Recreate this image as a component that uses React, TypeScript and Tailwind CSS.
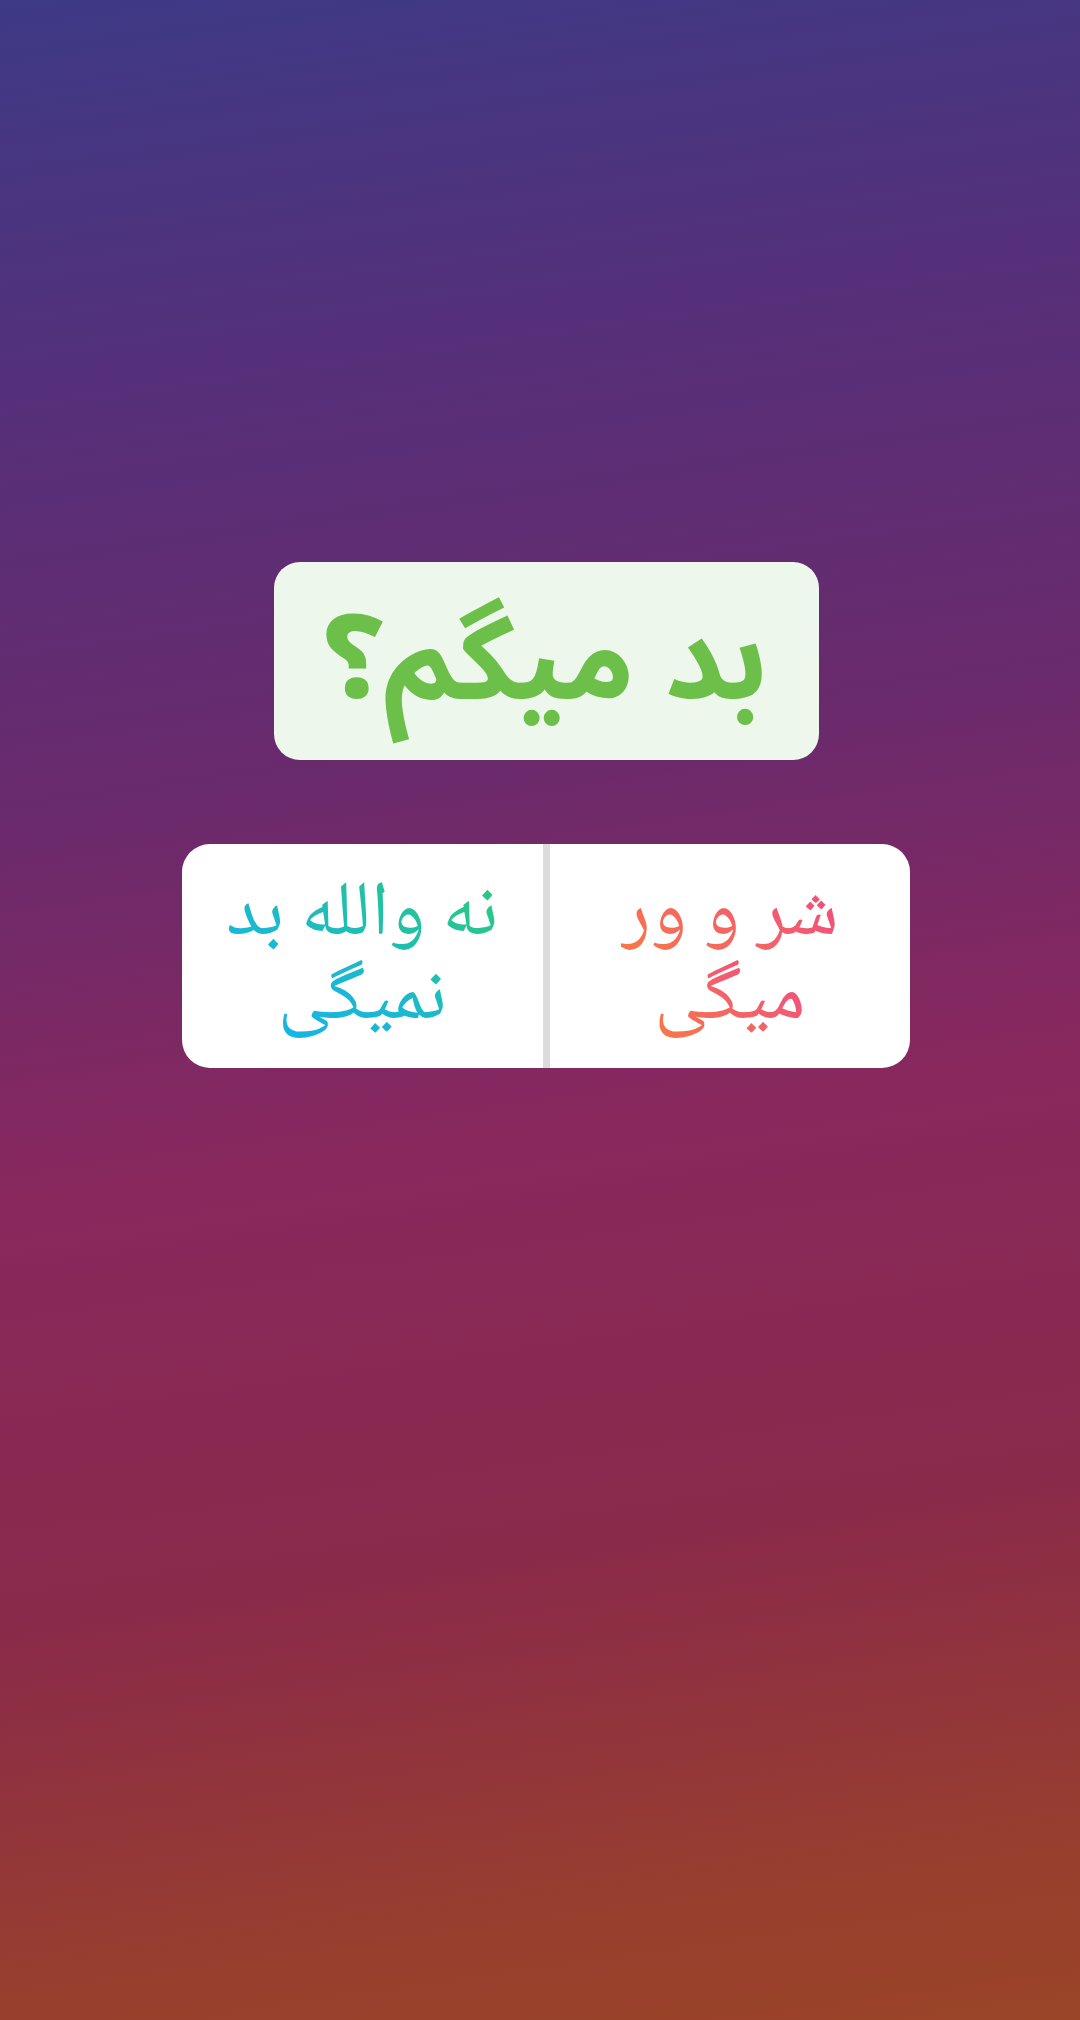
const titleFont = { fontFamily: '"Noto Sans Arabic", "DejaVu Sans", "Noto Sans", sans-serif' };
const optionFont = { fontFamily: '"Noto Naskh Arabic", "Noto Sans Arabic", "DejaVu Sans", sans-serif' };

export default function App() {
  return (
    <div
      dir="rtl"
      className="flex h-[2020px] w-[1080px] flex-col items-center bg-[linear-gradient(172deg,#3e3a86_0%,#55307a_18%,#6a2a6c_38%,#88285e_55%,#8a2a4a_75%,#983f2e_92%,#9a4428_100%)] pt-[562px] pl-[12px]"
    >
      <div className="flex h-[198px] w-[545px] items-center justify-center rounded-[26px] bg-[#eef7ec] pt-[2px]">
        <span className="text-[116px] font-bold leading-none text-[#6cc04a]" style={titleFont}>
          بد میگم؟
        </span>
      </div>

      <div className="mt-[84px] flex h-[224px] w-[728px] overflow-hidden rounded-[28px] bg-white" style={optionFont}>
        <div className="flex flex-1 flex-col items-center justify-center pt-[8px]">
          <div className="bg-[linear-gradient(35deg,#f77a45_0%,#f3606a_55%,#ee4a84_100%)] bg-clip-text text-center text-[77px] leading-[84px] text-transparent">
            شر و ور
          </div>
          <div className="bg-[linear-gradient(35deg,#f77a45_0%,#f3606a_55%,#ee4a84_100%)] bg-clip-text text-center text-[77px] leading-[84px] text-transparent">
            میگی
          </div>
        </div>
        <div className="w-[7px] bg-[#dcdcdc]" />
        <div className="flex flex-1 flex-col items-center justify-center pt-[8px]">
          <div className="bg-[linear-gradient(35deg,#17b5e6_0%,#1fbfae_50%,#2ccb78_100%)] bg-clip-text text-center text-[77px] leading-[84px] text-transparent">
            نه والله بد
          </div>
          <div className="bg-[linear-gradient(35deg,#17b5e6_0%,#1ab8d0_60%,#22c3a4_100%)] bg-clip-text text-center text-[77px] leading-[84px] text-transparent">
            نمیگی
          </div>
        </div>
      </div>
    </div>
  );
}
